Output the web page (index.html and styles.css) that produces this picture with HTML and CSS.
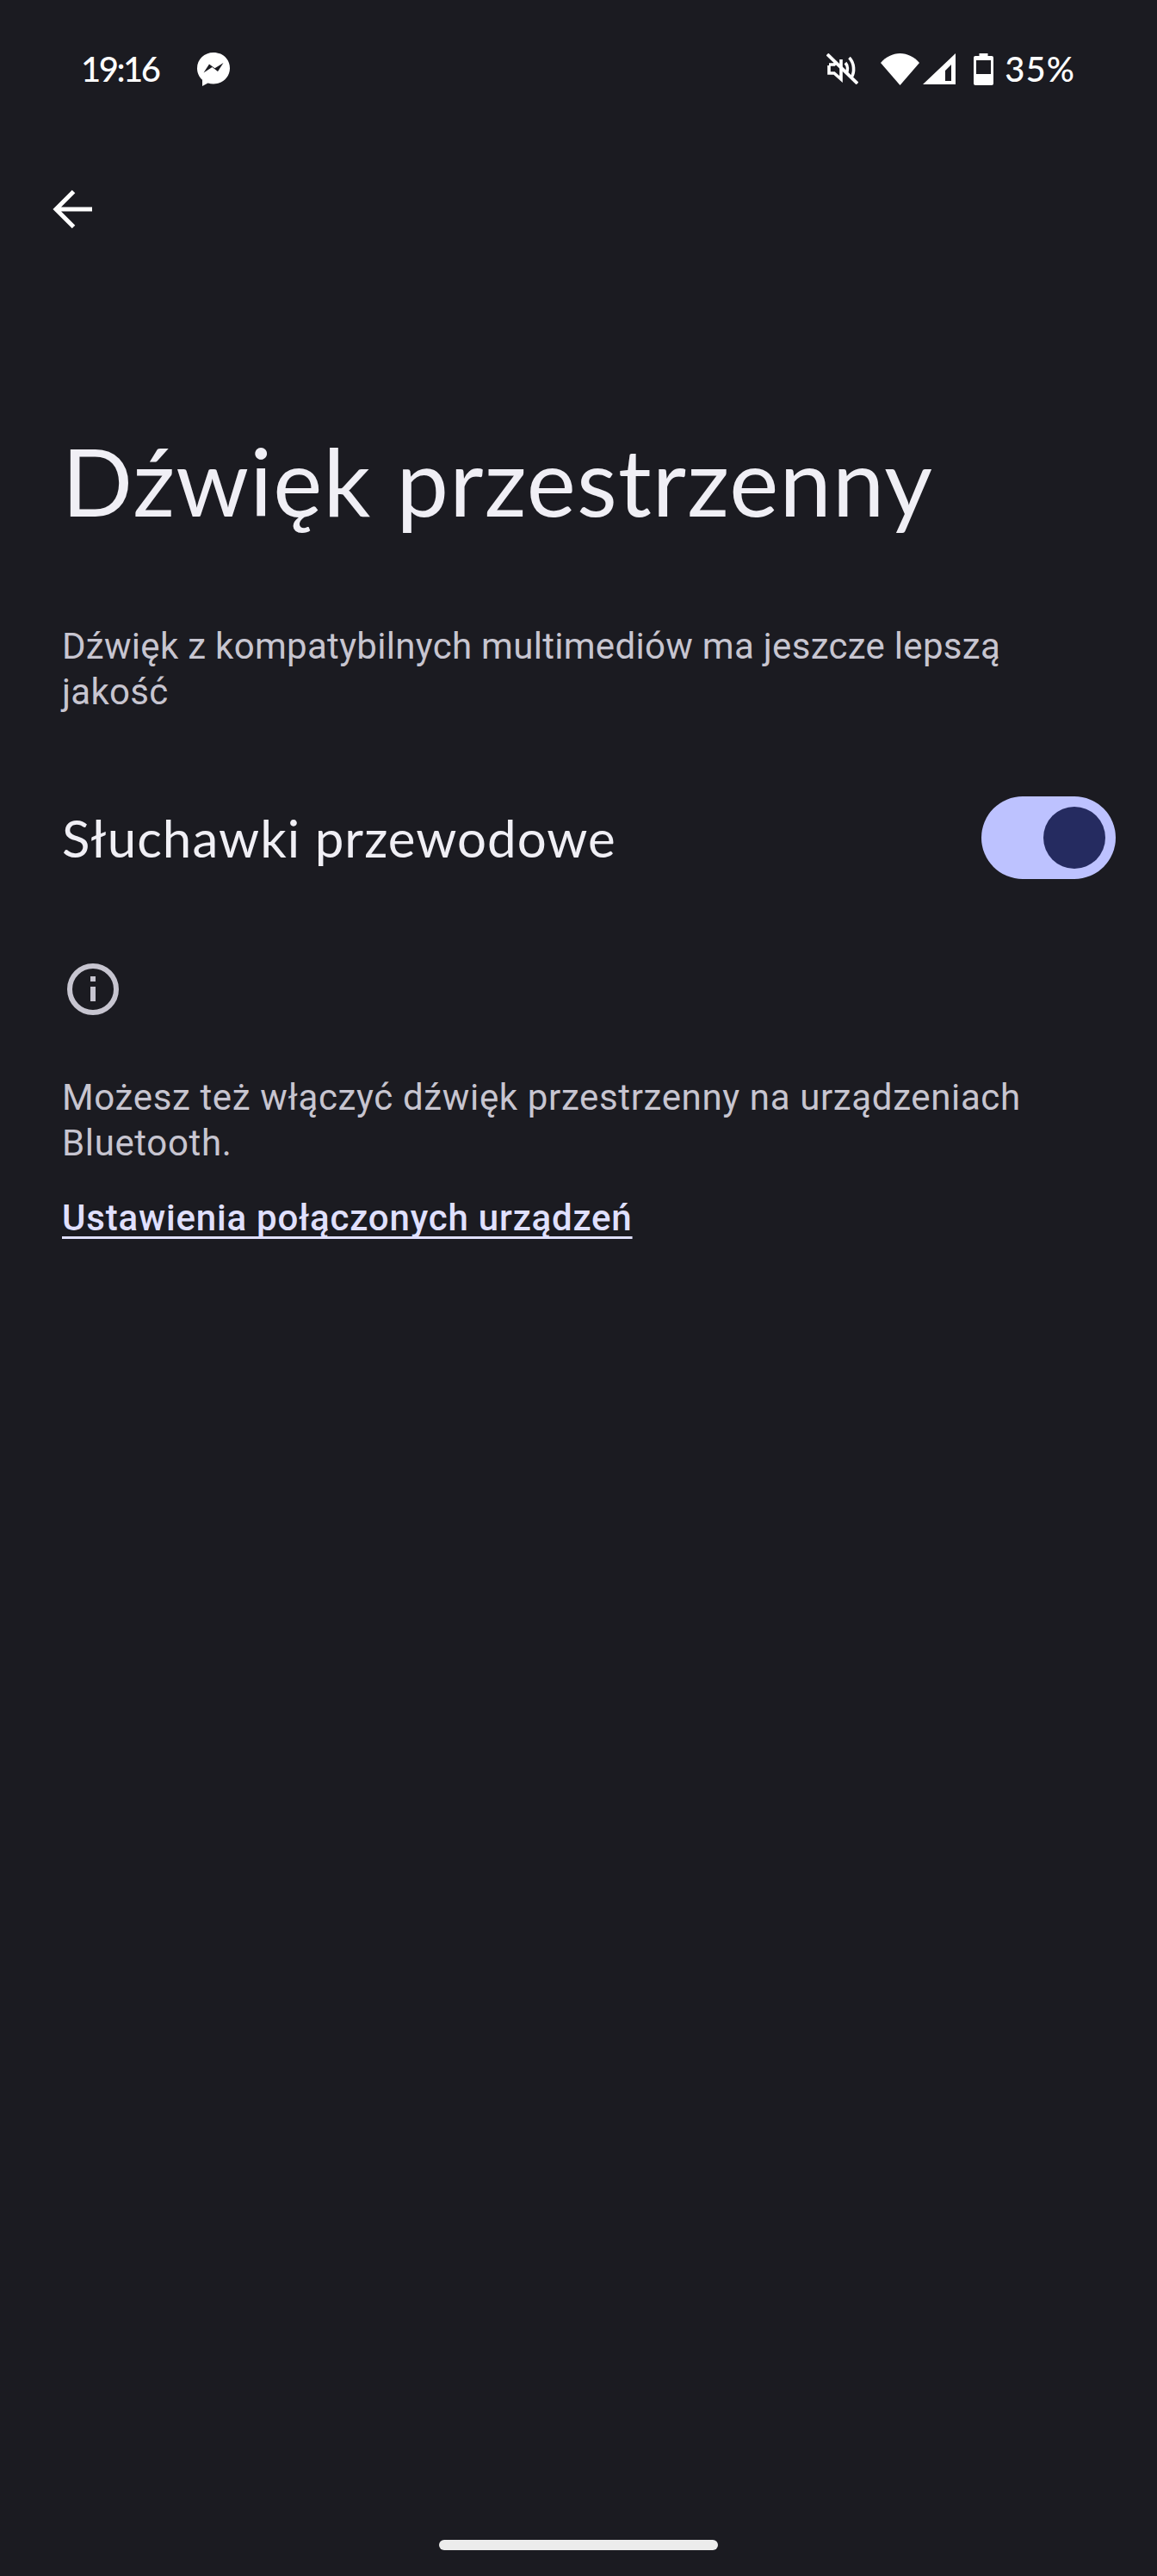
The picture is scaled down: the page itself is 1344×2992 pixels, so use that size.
FILE: index.html
```html
<!DOCTYPE html>
<html lang="pl">
<head>
<meta charset="utf-8">
<title>Dźwięk przestrzenny</title>
<link rel="stylesheet" href="styles.css">
</head>
<body>
<div class="screen">
  <header class="status">
    <div class="status-left">
      <span class="time">19:16</span>
      <svg class="messenger" viewBox="0 0 38 39"><path fill="#fff" d="M19 0C8.300 0 0 7.800 0 18.300c0 5.500 2.300 10.200 6 13.500V39l6.500-3.500c2 .6 4.200.9 6.500.9 10.700 0 19-7.900 19-18.100C38 7.800 29.700 0 19 0z"/><path fill="#1b1b21" d="M7.500 23.500l6.500-10 6.500 4.800 10-6.300-6.500 10-6.500-4.900z"/></svg>
    </div>
    <div class="status-right">
      <svg class="ic-mute" viewBox="0 0 37 36" fill="none" stroke="#fff" stroke-width="3.600"><path d="M3 13h6l3-3M17 7v23l-8-7H3v-9"/><path d="M22 11c3 3.500 3 8.500 1 12M26.500 5c6 6 6.500 17 2.500 23"/><path d="M1 1l35 34" stroke-width="3.800"/></svg>
      <svg class="ic-wifi" viewBox="0 0 45 37"><path fill="#fff" d="M0 11C6 4 14 0 22.500 0S39 4 45 11L22.500 37z"/></svg>
      <svg class="ic-signal" viewBox="0 0 38 36"><path fill="#fff" fill-rule="evenodd" d="M38 0v36H0zM33 13l-7 7v12h7z"/></svg>
      <svg class="ic-batt" viewBox="0 0 23 37"><path fill="#fff" fill-rule="evenodd" d="M6.500 0h10v3h4.500a2 2 0 0 1 2 2v30a2 2 0 0 1-2 2H2a2 2 0 0 1-2-2V5a2 2 0 0 1 2-2h4.500zM3 8v16h17V8z"/></svg>
      <span class="pct">35%</span>
    </div>
  </header>

  <button class="back" aria-label="Wstecz">
    <svg viewBox="0 0 48 48" fill="none" stroke="#fff" stroke-width="5"><path d="M47 24H5M25.500 3.500L5 24l20.500 20.500"/></svg>
  </button>

  <h1 class="title">Dźwięk przestrzenny</h1>
  <p class="desc">Dźwięk z kompatybilnych multimediów ma jeszcze lepszą jakość</p>

  <div class="row">
    <span class="row-label">Słuchawki przewodowe</span>
    <span class="toggle"><span class="thumb"></span></span>
  </div>

  <svg class="ic-info" viewBox="0 0 60 60" fill="none"><circle cx="30" cy="30" r="27" stroke="#c7c5d0" stroke-width="6"/><path fill="#c7c5d0" d="M27 15h6v6h-6zM27 27h6v17h-6z"/></svg>

  <p class="foot">Możesz też włączyć dźwięk przestrzenny na urządzeniach Bluetooth.</p>
  <a class="link" href="#">Ustawienia połączonych urządzeń</a>

  <div class="spacer"></div>
  <div class="handle"></div>
</div>
</body>
</html>
```
FILE: styles.css
```css
* { box-sizing: border-box; }
html, body { margin: 0; padding: 0; background: #1b1b21; }
.screen {
  width: 1344px;
  height: 2992px;
  background: #1b1b21;
  display: flex;
  flex-direction: column;
  padding-left: 72px;
  font-family: Roboto, "Noto Sans", sans-serif;
  overflow: hidden;
}
.status {
  height: 80px;
  margin-top: 40px;
  margin-left: 22px;
  margin-right: 96px;
  display: flex;
  align-items: center;
  justify-content: space-between;
  flex: none;
  color: #fff;
  font-family: Lato, sans-serif;
}
.status-left, .status-right { display: flex; align-items: center; }
.time { font-size: 40px; font-weight: 500; letter-spacing: -2.500px; line-height: 48px; }
.messenger { width: 38px; height: 39px; margin-left: 45px; }
.ic-mute { width: 37px; height: 36px; }
.ic-wifi { width: 45px; height: 37px; margin-left: 26px; }
.ic-signal { width: 38px; height: 36px; margin-left: 4px; }
.ic-batt { width: 23px; height: 37px; margin-left: 21px; }
.pct { font-size: 40px; font-weight: 500; margin-left: 13px; letter-spacing: 1px; line-height: 48px; margin-right: -1px; }
.back {
  width: 48px;
  height: 48px;
  padding: 0;
  margin: 99px 0 0 -12px;
  border: 0;
  background: none;
  flex: none;
}
.back svg { display: block; width: 48px; height: 48px; }
.title {
  margin: 223px 0 0;
  font-family: Lato, sans-serif;
  font-weight: 400;
  font-size: 108px;
  line-height: 136px;
  letter-spacing: 1.200px;
  color: #f0eff5;
  white-space: nowrap;
}
.desc {
  margin: 98px 0 0;
  width: 1120px;
  font-size: 42px;
  line-height: 53px;
  letter-spacing: 0.3px;
  color: #c7c5d0;
}
.row {
  margin: 95px 48px 0 0;
  height: 96px;
  display: flex;
  align-items: center;
  justify-content: space-between;
}
.row-label {
  font-family: Lato, sans-serif;
  font-size: 60px;
  letter-spacing: 1.050px;
  color: #f0eff5;
}
.toggle {
  width: 156px;
  height: 96px;
  border-radius: 48px;
  background: #bdc2ff;
  display: flex;
  align-items: center;
  justify-content: flex-end;
  padding-right: 12px;
}
.thumb {
  width: 72px;
  height: 72px;
  border-radius: 50%;
  background: #252b60;
}
.ic-info { width: 60px; height: 60px; margin: 98px 0 0 6px; flex: none; }
.foot {
  margin: 69px 0 0;
  width: 1240px;
  font-size: 42px;
  line-height: 53px;
  letter-spacing: 0.64px;
  color: #c7c5d0;
}
.link {
  margin-top: 34px;
  align-self: flex-start;
  font-size: 42px;
  font-weight: 500;
  line-height: 53px;
  letter-spacing: 0.8px;
  color: #e0e0ff;
  text-decoration: underline;
  text-decoration-thickness: 3px;
  text-underline-offset: 7px;
  text-decoration-skip-ink: none;
}
.spacer { flex: 1; }
.handle {
  width: 324px;
  height: 12px;
  border-radius: 6px;
  background: #ececec;
  margin: 0 0 30px 438px;
  flex: none;
}
```
